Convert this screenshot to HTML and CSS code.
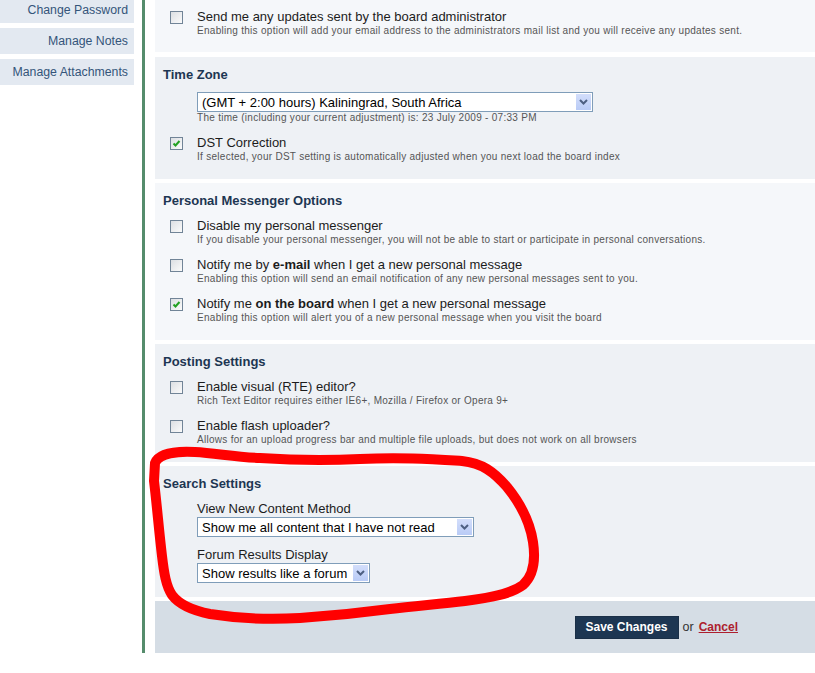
FILE: index.html
```html
<!DOCTYPE html>
<html lang="en">
<head>
    <meta charset="UTF-8">
    <meta name="viewport" content="width=device-width, initial-scale=1.0">
    <title>Board Settings</title>

    <link rel="stylesheet" href="styles.css">
</head>
<body>
    <div class="page">
        <ul class="side-menu">
            <li>Change Password</li>
            <li>Manage Notes</li>
            <li>Manage Attachments</li>
        </ul>

        <div class="main">
            <!-- top of the page is scrolled away, only the last option shows -->
            <div class="section row1 first">
                <div class="option">
                    <span class="check"></span>
                    <div>
                        <div class="label">Send me any updates sent by the board administrator</div>
                        <div class="hint">Enabling this option will add your email address to the administrators mail list and you will receive any updates sent.</div>
                    </div>
                </div>
            </div>

            <div class="section row2">
                <h3>Time Zone</h3>
                <div class="field">
                    <div class="select tz">
                        <span class="select-text">(GMT + 2:00 hours) Kaliningrad, South Africa</span>
                        <span class="select-arrow"><svg width="9" height="6" viewBox="0 0 9 6"><path d="M1 1 L4.5 4.5 L8 1" fill="none" stroke="#4d5f82" stroke-width="2"/></svg></span>
                    </div>
                    <div class="hint">The time (including your current adjustment) is: 23 July 2009 - 07:33 PM</div>
                </div>
                <div class="option">
                    <span class="check checked"><svg width="11" height="11" viewBox="0 0 11 11"><path d="M2.5 5.5 L4.5 7.5 L8.5 3" fill="none" stroke="#22a022" stroke-width="2"/></svg></span>
                    <div>
                        <div class="label">DST Correction</div>
                        <div class="hint">If selected, your DST setting is automatically adjusted when you next load the board index</div>
                    </div>
                </div>
            </div>

            <div class="section row1">
                <h3>Personal Messenger Options</h3>
                <div class="option">
                    <span class="check"></span>
                    <div>
                        <div class="label">Disable my personal messenger</div>
                        <div class="hint">If you disable your personal messenger, you will not be able to start or participate in personal conversations.</div>
                    </div>
                </div>
                <div class="option">
                    <span class="check"></span>
                    <div>
                        <div class="label">Notify me by <strong>e-mail</strong> when I get a new personal message</div>
                        <div class="hint">Enabling this option will send an email notification of any new personal messages sent to you.</div>
                    </div>
                </div>
                <div class="option">
                    <span class="check checked"><svg width="11" height="11" viewBox="0 0 11 11"><path d="M2.5 5.5 L4.5 7.5 L8.5 3" fill="none" stroke="#22a022" stroke-width="2"/></svg></span>
                    <div>
                        <div class="label">Notify me <strong>on the board</strong> when I get a new personal message</div>
                        <div class="hint">Enabling this option will alert you of a new personal message when you visit the board</div>
                    </div>
                </div>
            </div>

            <div class="section row2">
                <h3>Posting Settings</h3>
                <div class="option">
                    <span class="check"></span>
                    <div>
                        <div class="label">Enable visual (RTE) editor?</div>
                        <div class="hint">Rich Text Editor requires either IE6+, Mozilla / Firefox or Opera 9+</div>
                    </div>
                </div>
                <div class="option">
                    <span class="check"></span>
                    <div>
                        <div class="label">Enable flash uploader?</div>
                        <div class="hint">Allows for an upload progress bar and multiple file uploads, but does not work on all browsers</div>
                    </div>
                </div>
            </div>

            <div class="section row2 last">
                <h3>Search Settings</h3>
                <div class="field">
                    <div class="label">View New Content Method</div>
                    <div class="select vnc">
                        <span class="select-text">Show me all content that I have not read</span>
                        <span class="select-arrow"><svg width="9" height="6" viewBox="0 0 9 6"><path d="M1 1 L4.5 4.5 L8 1" fill="none" stroke="#4d5f82" stroke-width="2"/></svg></span>
                    </div>
                </div>
                <div class="field spaced">
                    <div class="label">Forum Results Display</div>
                    <div class="select frd">
                        <span class="select-text">Show results like a forum</span>
                        <span class="select-arrow"><svg width="9" height="6" viewBox="0 0 9 6"><path d="M1 1 L4.5 4.5 L8 1" fill="none" stroke="#4d5f82" stroke-width="2"/></svg></span>
                    </div>
                </div>
            </div>

            <div class="actions">
                <button type="submit" class="btn-save">Save Changes</button>
                <span class="or">or</span>
                <a href="#" class="cancel">Cancel</a>
            </div>
        </div>
    </div>

    <!-- red marker circle drawn over the screenshot -->
    <svg class="scribble" width="815" height="673" viewBox="0 0 815 673">
        <path d="M155 463 C159 453 178 451 195 452 C215 453 235 457 260 458 C290 460 320 461 360 459 C400 457 430 459 462 461 C482 463 494 472 507 487 C520 503 530 522 533 542 C536 562 533 576 523 585 C511 594 490 598 465 601 C440 604 415 606 390 609 C360 613 330 616 300 618 C265 620 235 618 210 614 C190 610 178 603 172 595 C166 586 164 573 162 556 C159 531 157 506 154 481 Z"
              fill="none" stroke="#ff0000" stroke-width="10" stroke-linejoin="round"/>
    </svg>
</body>
</html>
```

FILE: styles.css
```css
body {
    margin: 0;
    padding: 0;
    background-color: #fff;
    font-family: "Liberation Sans", Arial, sans-serif;
    color: #1c1c1c;
}

.page {
    display: flex;
    align-items: flex-start;
}

.side-menu {
    list-style: none;
    margin: -3px 8px 0 0;
    padding: 0;
    width: 134px;
    flex-shrink: 0;
}

.side-menu li {
    background-color: #e3e9f1;
    color: #34557a;
    font-size: 12.3px;
    height: 26px;
    line-height: 26px;
    text-align: right;
    padding-right: 6px;
    margin-bottom: 5px;
}

.main {
    flex: 1;
    border-left: 3px solid #558c6c;
    padding-left: 10px;
}

.section {
    padding: 10px 8px 16px 8px;
    margin-bottom: 4px;
}

.section.first {
    padding-top: 9px;
    padding-bottom: 15px;
    margin-bottom: 5px;
}

.section.last {
    padding-bottom: 14px;
}

.row1 {
    background-color: #f5f7fa;
}

.row2 {
    background-color: #eef1f5;
}

.section h3 {
    margin: 0 0 9px 0;
    font-size: 13px;
    line-height: 16px;
    color: #1d3652;
}

.option {
    display: flex;
    align-items: flex-start;
    padding-left: 7px;
    margin-top: 11px;
}

.section.first .option,
.section h3 + .option {
    margin-top: 0;
}

.check {
    width: 11px;
    height: 11px;
    border: 1px solid #718497;
    background: linear-gradient(135deg, #dcdfe3, #fbfbfb);
    margin: 2px 14px 0 0;
    flex-shrink: 0;
    display: flex;
    align-items: center;
    justify-content: center;
}

.label {
    font-size: 13px;
    line-height: 16px;
}

.hint {
    font-size: 10px;
    line-height: 12px;
    color: #555;
    letter-spacing: 0.28px;
}

.field {
    padding-left: 34px;
}

.field.spaced {
    margin-top: 10px;
}

.select {
    box-sizing: border-box;
    height: 20px;
    border: 1px solid #7f9db9;
    background-color: #fff;
    display: flex;
    align-items: center;
    justify-content: space-between;
    padding: 0 1px 0 4px;
}

.select.tz {
    width: 396px;
}

.select.vnc {
    width: 277px;
}

.select.frd {
    width: 173px;
}

.select-text {
    font-size: 13px;
    color: #000;
    white-space: nowrap;
}

.select-arrow {
    width: 15px;
    height: 16px;
    background: linear-gradient(#d3defb, #b9cbf6);
    display: flex;
    align-items: center;
    justify-content: center;
}

.actions {
    background-color: #d5dde5;
    height: 52px;
    display: flex;
    align-items: center;
    justify-content: flex-end;
    padding-right: 77px;
    font-size: 12.5px;
}

.btn-save {
    background-color: #1d3652;
    color: #fff;
    border: 1px solid #1a2f47;
    font-family: "Liberation Sans", Arial, sans-serif;
    font-weight: bold;
    font-size: 12px;
    width: 104px;
    height: 23px;
    padding: 0;
    margin-right: 4px;
}

.or {
    color: #333;
    margin-right: 5px;
}

.cancel {
    color: #ad1f2f;
    font-weight: bold;
    font-size: 12px;
}

.scribble {
    position: absolute;
    top: 0;
    left: 0;
    pointer-events: none;
}
```
